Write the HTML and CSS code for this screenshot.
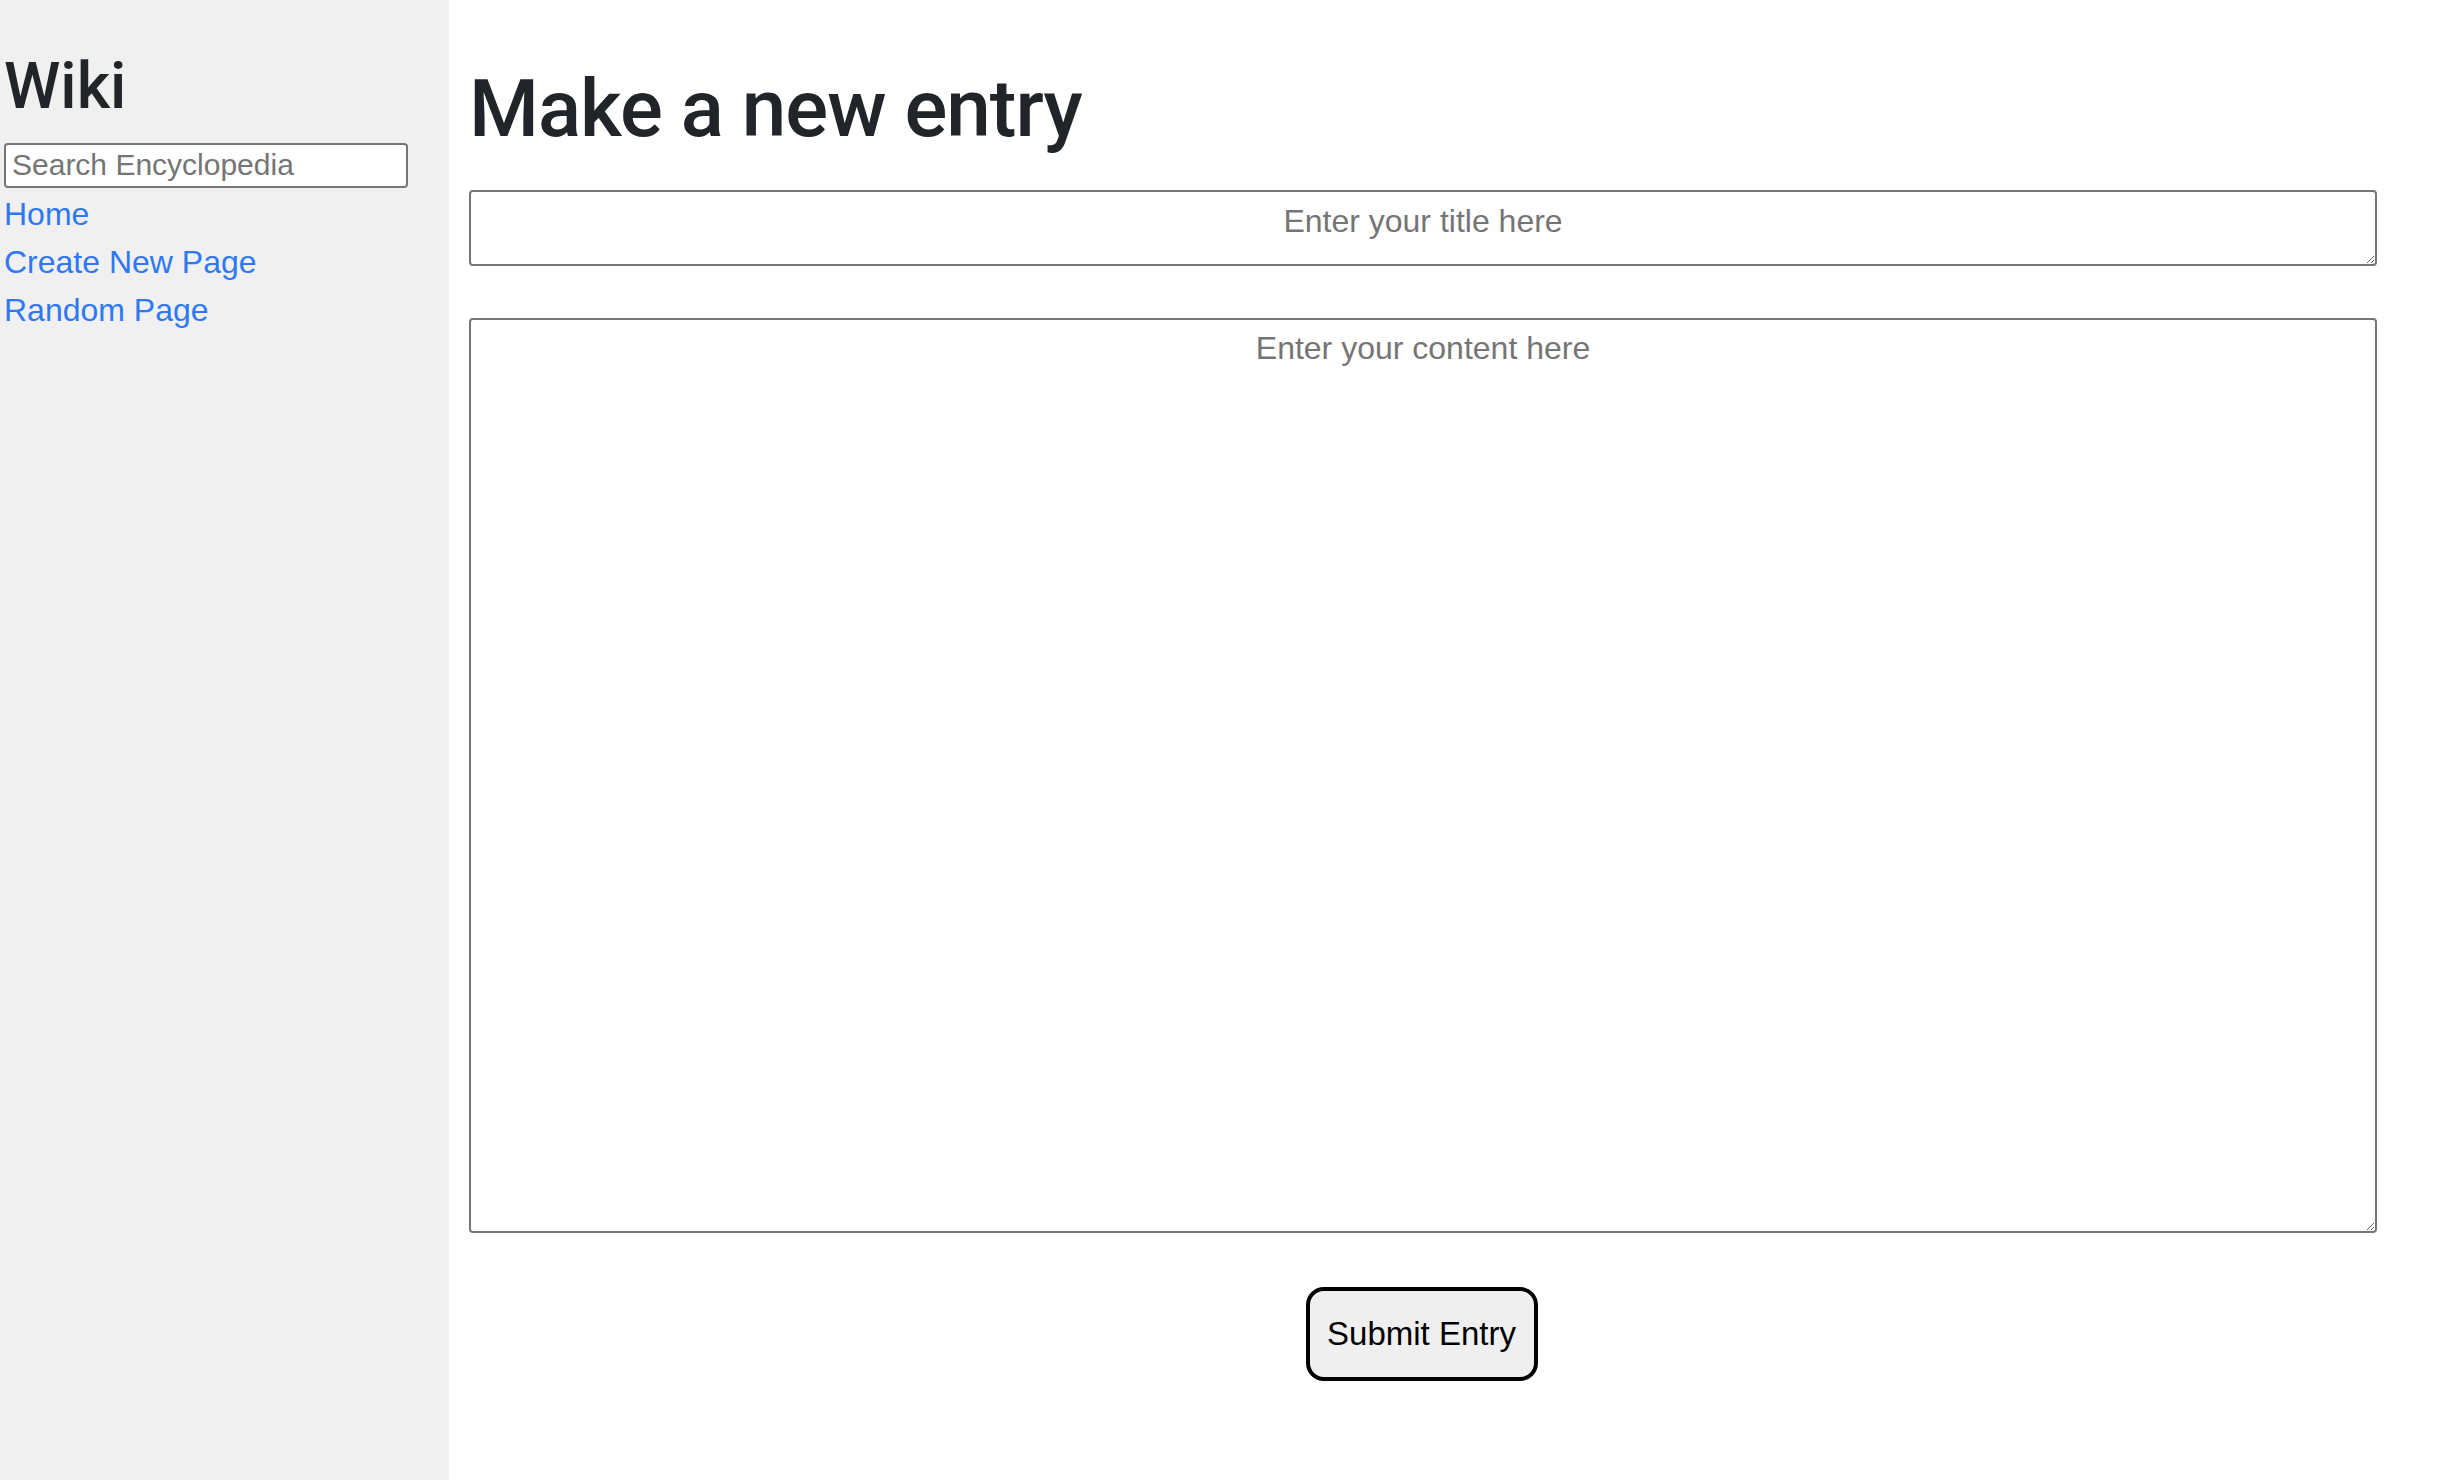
FILE: index.html
```html
<!DOCTYPE html>
<html lang="en">
<head>
<meta charset="utf-8">
<title>Create New Page</title>
<link rel="stylesheet" href="styles.css">
</head>
<body>
<div class="layout">
  <aside class="sidebar">
    <h2 class="brand">Wiki</h2>
    <form class="search-form">
      <input class="search" type="text" name="q" placeholder="Search Encyclopedia">
    </form>
    <nav class="nav">
      <a class="nav-link" href="#">Home</a>
      <a class="nav-link" href="#">Create New Page</a>
      <a class="nav-link" href="#">Random Page</a>
    </nav>
  </aside>
  <main class="main">
    <h1 class="page-title">Make a new entry</h1>
    <form class="entry-form">
      <textarea class="field field-title" placeholder="Enter your title here"></textarea>
      <textarea class="field field-content" placeholder="Enter your content here"></textarea>
      <div class="actions">
        <button class="submit" type="submit">Submit Entry</button>
      </div>
    </form>
  </main>
</div>
</body>
</html>
```

FILE: styles.css
```css
html, body {
  margin: 0;
  padding: 0;
  background: #ffffff;
}

body {
  font-family: "Liberation Sans", Arial, sans-serif;
  color: #212529;
  font-size: 32px;
}

.layout {
  display: flex;
  min-height: 1480px;
}

.sidebar {
  width: 449px;
  flex: 0 0 449px;
  background: #f0f0f0;
  box-sizing: border-box;
  padding: 49px 4px 0 4px;
}

.brand {
  margin: 0 0 17px 0;
  font-family: Roboto, "Liberation Sans", Arial, sans-serif;
  font-size: 64px;
  font-weight: 500;
  line-height: 1.2;
  color: #212529;
}

.search-form {
  margin: 0;
}

.search {
  display: block;
  box-sizing: border-box;
  width: 404px;
  height: 45px;
  margin: 0;
  border: 2px solid #767676;
  border-radius: 4px;
  padding: 0 6px;
  font-family: "Liberation Sans", Arial, sans-serif;
  font-size: 30px;
  color: #212529;
  background: #ffffff;
}

.search::placeholder {
  color: #757575;
}

.nav {
  display: flex;
  flex-direction: column;
  margin-top: 2px;
}

.nav-link {
  display: block;
  line-height: 48px;
  font-size: 32px;
  color: #2f78f5;
  text-decoration: none;
}

.main {
  flex: 1;
  padding: 61px 0 0 20px;
}

.page-title {
  margin: 0 0 33px 0;
  font-family: Roboto, "Liberation Sans", Arial, sans-serif;
  font-size: 80px;
  font-weight: 500;
  line-height: 1.2;
  letter-spacing: -1px;
  color: #212529;
}

.entry-form {
  width: 1908px;
  display: flex;
  flex-direction: column;
}

.field {
  display: block;
  box-sizing: border-box;
  width: 1908px;
  margin: 0;
  border: 2px solid #767676;
  border-radius: 4px;
  font-family: "Liberation Sans", Arial, sans-serif;
  font-size: 32px;
  text-align: center;
  color: #212529;
  background: #ffffff;
}

.field::placeholder {
  color: #757575;
}

.field-title {
  height: 76px;
  padding: 11px 4px 4px 4px;
}

.field-content {
  height: 915px;
  margin-top: 52px;
  padding: 10px 4px 4px 4px;
}

.actions {
  display: flex;
  justify-content: center;
  margin-top: 54px;
}

.submit {
  box-sizing: border-box;
  width: 232px;
  height: 94px;
  border: 4px solid #000000;
  border-radius: 18px;
  background: #efefef;
  color: #000000;
  font-family: "Liberation Sans", Arial, sans-serif;
  font-size: 33px;
  padding: 0;
  margin-left: -3px;
}
```
